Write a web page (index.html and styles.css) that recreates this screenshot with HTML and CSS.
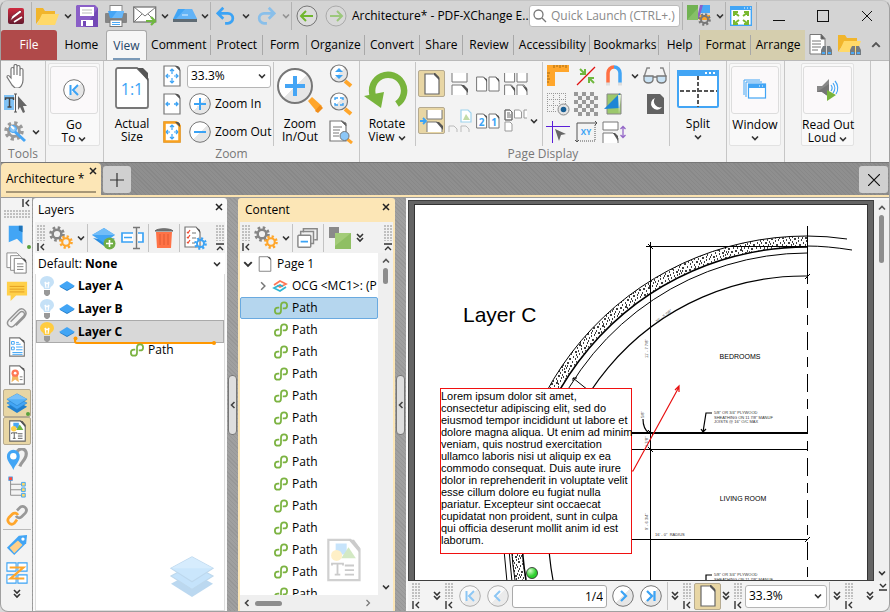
FILE: index.html
```html
<!DOCTYPE html>
<html lang="en">
<head>
<meta charset="utf-8">
<title>Architecture* - PDF-XChange Editor</title>
<link rel="stylesheet" href="styles.css">
</head>
<body>
<svg class="defs" aria-hidden="true">
<defs>
<linearGradient id="disc" x1="0" y1="0" x2="1" y2="1"><stop offset=".5" stop-color="#fff"/><stop offset=".5" stop-color="#e6e6e6"/></linearGradient>
<linearGradient id="red" x1="0" y1="0" x2="0" y2="1"><stop offset="0" stop-color="#d02c40"/><stop offset="1" stop-color="#631a2e"/></linearGradient>
<radialGradient id="ball" cx=".35" cy=".3"><stop offset="0" stop-color="#d4ffc8"/><stop offset="1" stop-color="#2fd02f"/></radialGradient>
<pattern id="speckle" width="23" height="19" patternUnits="userSpaceOnUse"><rect width="23" height="19" fill="#fff"/><path d="M1 1h1M4 3h2M8 1h1M11 4h1M15 2h2M20 1h1M2 6h1M6 7h1M9 6h2M14 7h1M18 5h2M21 8h1M0 10h2M4 12h1M7 10h1M12 11h2M16 10h1M19 12h1M2 15h1M6 15h2M10 14h1M14 15h1M17 17h2M21 15h1M4 18h1M9 17h1M13 18h1M12 1h1M6 4h1M17 8h1M10 9h1M1 13h1M22 4h1M16 13h1M3 9h1M13 5h1M20 10h1M8 12h1M5 1h1M0 4h1M12 8h1M15 5h1M11 16h1M0 17h1" stroke="#000" stroke-width="1.300"/></pattern>
</defs>
<symbol id="chev" viewBox="0 0 8 8"><path d="M1 2.500l3 3 3-3" fill="none" stroke="#333" stroke-width="1.600"/></symbol>
<symbol id="chev-up" viewBox="0 0 8 8"><path d="M1 5.500l3-3 3 3" fill="none" stroke="#555" stroke-width="1.600"/></symbol>
<symbol id="chev-l" viewBox="0 0 8 8"><path d="M5.500 1l-3 3 3 3" fill="none" stroke="#444" stroke-width="1.600"/></symbol>
<symbol id="chev-r" viewBox="0 0 8 8"><path d="M2.500 1l3 3-3 3" fill="none" stroke="#777" stroke-width="1.200"/></symbol>
<symbol id="dchev" viewBox="0 0 8 10"><path d="M1 1l3 3 3-3M1 5l3 3 3-3" fill="none" stroke="#333" stroke-width="1.600"/></symbol>
<symbol id="home" viewBox="0 0 8 8"><path d="M1 0v8M7 1L4 4l3 3M4 4h1" fill="none" stroke="#333" stroke-width="1.400"/></symbol>
<symbol id="upbar" viewBox="0 0 8 8"><path d="M0 1h8M1 7l3-3 3 3" fill="none" stroke="#333" stroke-width="1.400"/></symbol>
<symbol id="downbar" viewBox="0 0 8 8"><path d="M0 7h8M1 1l3 3 3-3" fill="none" stroke="#333" stroke-width="1.400"/></symbol>
<symbol id="x" viewBox="0 0 8 8"><path d="M1 1l6 6M7 1L1 7" fill="none" stroke="#222" stroke-width="1.500"/></symbol>

<symbol id="app" viewBox="0 0 16 16"><rect width="16" height="16" rx="2" fill="url(#red)"/><path d="M2 13l2-5 8-6 2 2-8 6zM7 13l7-5" fill="#fff" stroke="#7a1c30" stroke-width=".8"/><path d="M6 14l8-5" stroke="#fff" stroke-width="1.500"/></symbol>
<symbol id="folder" viewBox="0 0 24 20"><path d="M0 18V2h7l2 3h10v4H7z" fill="#f1b52c"/><path d="M6 8h17l-4 11H1z" fill="#ffd969"/></symbol>
<symbol id="save" viewBox="0 0 22 22"><path d="M1 0h18l3 3v19H0V1z" fill="#8a5fc7"/><path d="M22 3v19H9z" fill="#7348b6"/><rect x="4" y="2" width="14" height="9" fill="#fff"/><path d="M6 5h10M6 8h10" stroke="#bbb"/><path d="M5 15h12v6H5z" fill="#fff"/><rect x="7" y="16" width="3" height="5" fill="#7348b6"/></symbol>
<symbol id="print" viewBox="0 0 22 22"><rect x="5" y=".5" width="12" height="7" fill="#fff" stroke="#888"/><rect y="8" width="22" height="10" rx="1" fill="#858585"/><path d="M3 6h16l-2 7H5z" fill="#45a5f5"/><path d="M12 6h7l-2 7H7z" fill="#68b8fa"/><rect x="5" y="15" width="12" height="6.500" fill="#fff" stroke="#777"/><path d="M7 17.500h8M7 19.500h8" stroke="#4aa8f5"/></symbol>
<symbol id="mail" viewBox="0 0 24 20"><rect x=".7" y="1" width="22" height="15" fill="#fff" stroke="#777" stroke-width="1.300"/><path d="M1 1l11 9L23 1M1 16l8-8M23 16l-8-8" fill="none" stroke="#777"/><path d="M13 15h8M18 11l4 4-4 4" fill="none" stroke="#70b83f" stroke-width="2.200"/></symbol>
<symbol id="scan" viewBox="0 0 24 16"><path d="M5 1h14l5 10H0z" fill="#41a5f5"/><path d="M12 1h7l5 10H3z" fill="#78bdf8" opacity=".6"/><rect y="11" width="24" height="3" fill="#5f6b74"/><path d="M9 7h6" stroke="#e4f2ff"/></symbol>
<symbol id="undo" viewBox="0 0 22 20"><path d="M8 1L2 7l6 6M2 7h11a5.500 5.500 0 0 1 0 11h-3" fill="none" stroke="#3ba3f5" stroke-width="3"/></symbol>
<symbol id="redo" viewBox="0 0 22 20"><path d="M14 1l6 6-6 6M20 7H9a5.500 5.500 0 0 0 0 11h3" fill="none" stroke="#89bfea" stroke-width="3"/></symbol>
<symbol id="back" viewBox="0 0 22 22"><circle cx="11" cy="11" r="10" fill="#dcdcdc" stroke="#777"/><path d="M17 11H6M10 6l-5 5 5 5" fill="none" stroke="#70b62f" stroke-width="2"/></symbol>
<symbol id="fwd" viewBox="0 0 22 22"><circle cx="11" cy="11" r="10" fill="#d8d8d8" stroke="#aaa"/><path d="M5 11h11M12 6l5 5-5 5" fill="none" stroke="#9cc87c" stroke-width="2"/></symbol>
<symbol id="lens" viewBox="0 0 14 14"><circle cx="5.500" cy="5.500" r="4.500" fill="none" stroke="#777" stroke-width="1.300"/><path d="M9 9l4 4" stroke="#777" stroke-width="1.300"/></symbol>
<symbol id="gear" viewBox="0 0 16 16"><circle cx="8" cy="8" r="6.300" fill="none" stroke="currentColor" stroke-width="3" stroke-dasharray="2.500 2.440"/><circle cx="8" cy="8" r="4.300" fill="none" stroke="currentColor" stroke-width="2.400"/></symbol>
<symbol id="ui" viewBox="0 0 24 22"><path d="M0 0h11v15H0z" fill="#71b252"/><path d="M13 0h10v8H13z" fill="#4ba8f5"/><path d="M13 0h3l-4 14-2-1z" fill="#8a60c8"/><path d="M13 10h10v5H12z" fill="#ffa62b"/><path d="M0 15L11 3v12z" fill="#86c067"/><g color="#777" transform="translate(11 8)"><use href="#gear" width="13" height="13"/></g></symbol>
<symbol id="full" viewBox="0 0 22 20"><rect x=".7" y=".7" width="20.600" height="18.600" fill="#fff" stroke="#42a5f5" stroke-width="1.400"/><path d="M0 0h22v4H0z" fill="#42a5f5"/><path d="M14 2h1M17 2h1M20 2h1" stroke="#fff"/><path d="M4 10V6h4M18 10V6h-4M4 14v4h4M18 14v4h-4M5 7l4 3M17 7l-4 3M5 17l4-3M17 17l-4-3" fill="none" stroke="#7ab92f" stroke-width="2"/></symbol>
<symbol id="finddoc" viewBox="0 0 24 22"><path d="M1 .5h11l4 4V20H1z" fill="#fff" stroke="#777"/><path d="M12 0v5h4zM3 7h9M3 10h9M3 13h9M3 16h6" stroke="#777" fill="#555"/><path d="M12 21v-5l2-4h3v9zM23 21v-5l-2-4h-3v9z" fill="#757b80"/><path d="M13 19h3M19 19h3" stroke="#4ba8f5" stroke-width="2"/></symbol>
<symbol id="findfold" viewBox="0 0 24 22"><path d="M0 18V1h7l2 3h10v4H7z" fill="#f1b52c"/><path d="M6 7h17l-4 11H1z" fill="#ffd969"/><path d="M12 21v-5l2-4h3v9zM23 21v-5l-2-4h-3v9z" fill="#757b80"/><path d="M13 19h3M19 19h3" stroke="#4ba8f5" stroke-width="2"/></symbol>

<symbol id="hand" viewBox="0 0 20 24"><path d="M6 21L1 13c0-2 2-2 3 0l1 1V5c0-2 3-2 3 0v6V2c0-2 3-2 3 0v9-8c0-2 3-2 3 0v9-6c0-2 3-2 3 0v10c0 5-3 8-5 8H9z" fill="#fff" stroke="#777" stroke-width="1.200"/></symbol>
<symbol id="tsel" viewBox="0 0 24 22"><rect y="2" width="10" height="15" fill="#80c2f5"/><path d="M1.500 7V5h8v2M5.500 5v9M3.500 14h4" stroke="#444" stroke-width="1.500" fill="none"/><path d="M10 1h3M10 19h3M11.500 1v18" stroke="#555"/><path d="M14 3l9 10h-4l2 6-2 1-3-6-2 3z" fill="#666"/></symbol>
<symbol id="toolgear" viewBox="0 0 24 22"><g color="#999"><use href="#gear" width="20" height="20"/></g><path d="M8 8l13 12" stroke="#45a5f5" stroke-width="3"/><circle cx="9" cy="8" r="3.500" fill="#8cc7f7" stroke="#45a5f5"/><path d="M7 5l3 3" stroke="#fff" stroke-width="2"/></symbol>
<symbol id="cfirst" viewBox="0 0 22 22"><circle cx="11" cy="11" r="10.300" fill="url(#disc)" stroke="#777"/><path d="M7.500 6v10M15 6l-5 5 5 5" fill="none" stroke="#3ba3f5" stroke-width="2"/></symbol>
<symbol id="clast" viewBox="0 0 22 22"><circle cx="11" cy="11" r="10.300" fill="url(#disc)" stroke="#777"/><path d="M14.500 6v10M7 6l5 5-5 5" fill="none" stroke="#3ba3f5" stroke-width="2.200"/></symbol>
<symbol id="cprev" viewBox="0 0 22 22"><circle cx="11" cy="11" r="10.300" fill="url(#disc)" stroke="#777"/><path d="M13 6l-5 5 5 5" fill="none" stroke="#3ba3f5" stroke-width="2"/></symbol>
<symbol id="cnext" viewBox="0 0 22 22"><circle cx="11" cy="11" r="10.300" fill="url(#disc)" stroke="#777"/><path d="M9 6l5 5-5 5" fill="none" stroke="#3ba3f5" stroke-width="2.200"/></symbol>
<symbol id="cplus" viewBox="0 0 22 22"><circle cx="11" cy="11" r="10.300" fill="url(#disc)" stroke="#777"/><path d="M5 11h12M11 5v12" stroke="#3ba3f5" stroke-width="2"/></symbol>
<symbol id="cminus" viewBox="0 0 22 22"><circle cx="11" cy="11" r="10.300" fill="url(#disc)" stroke="#777"/><path d="M5 11h12" stroke="#3ba3f5" stroke-width="2"/></symbol>
<symbol id="pg" viewBox="0 0 18 22"><path d="M1 1h12l4 4v16H1z" fill="#fff" stroke="#777" stroke-width="1.200"/><path d="M12 1l5 5V3l-2-2z" fill="#555"/></symbol>
<symbol id="fitpage" viewBox="0 0 18 22"><use href="#pg"/><path d="M9 4v5M9 13v5M3 11h4M11 11h4M7 6l2-2 2 2M7 16l2 2 2-2M5 9l-2 2 2 2M13 9l2 2-2 2" stroke="#3ba3f5" fill="none" stroke-width="1.200"/></symbol>
<symbol id="fitwidth" viewBox="0 0 18 22"><use href="#pg"/><path d="M3 11h4M11 11h4M5 9l-2 2 2 2M13 9l2 2-2 2" stroke="#3ba3f5" fill="none" stroke-width="1.300"/></symbol>
<symbol id="fitvis" viewBox="0 0 18 22"><use href="#fitpage"/><path d="M1.500 1.500h12l3 3v16h-15z" stroke="#f9a11f" stroke-width="2.500" fill="none"/><path d="M12 1l5 5V3l-2-2z" fill="#555"/></symbol>
<symbol id="zoombig" viewBox="0 0 48 48"><path d="M32 34l4-4 10 9-5 6z" fill="#ffa62b"/><path d="M44 38l3 3-5 5-3-2z" fill="#f08d1a"/><circle cx="19" cy="19" r="17" fill="url(#disc)" stroke="#777" stroke-width="2"/><path d="M9 19h20M19 9v20" stroke="#45a5f5" stroke-width="4"/></symbol>
<symbol id="zoomdyn" viewBox="0 0 24 24"><path d="M16 17l6 5" stroke="#ffa62b" stroke-width="4"/><circle cx="10" cy="9.500" r="8.500" fill="url(#disc)" stroke="#777" stroke-width="1.200"/><path d="M6 8l4-4 4 4zM6 11h8l-4 4z" fill="#3ba3f5"/></symbol>
<symbol id="zoommarq" viewBox="0 0 24 24"><path d="M16 17l6 5" stroke="#ffa62b" stroke-width="4"/><circle cx="10" cy="9.500" r="8.500" fill="url(#disc)" stroke="#777" stroke-width="1.200"/><path d="M6 8V6h3M11 6h3v2M6 11v2h3M14 11v2h-3" fill="none" stroke="#3ba3f5" stroke-width="1.400"/></symbol>
<symbol id="zoomdoc" viewBox="0 0 24 24"><path d="M1 1h12l4 4v16H1z" fill="#fff" stroke="#777" stroke-width="1.200"/><path d="M12 1l5 5V3zM4 7h9M4 10h7M4 13h6M4 16h6" stroke="#777" fill="#555"/><path d="M18 19l5 4" stroke="#ffa62b" stroke-width="3"/><circle cx="15.500" cy="16" r="4.500" fill="#8cc7f7" stroke="#777"/></symbol>
<symbol id="rotate" viewBox="0 0 46 40"><path d="M9 25a16 16 0 1 1 24 8" fill="none" stroke="#78b43c" stroke-width="6.500"/><path d="M0 25l20-4-3 16z" fill="#78b43c"/></symbol>

<symbol id="p1" viewBox="0 0 24 24"><path d="M5 2h10l4 4v16H5z" fill="#fff" stroke="#666" stroke-width="1.200"/><path d="M14 1v2l5 5V5l-4-4z" fill="#555"/></symbol>
<symbol id="p2" viewBox="0 0 24 24"><path d="M4 1v9h15V1M4 23V13h10l5 4v6" fill="#fff" stroke="#777"/><path d="M13 13l7 8v-4l-4-4z" fill="#555"/></symbol>
<symbol id="p3" viewBox="0 0 24 24"><path d="M.6 5h7l3 3v11H.6zM13 5h7l3 3v11H13z" fill="#fff" stroke="#777"/><path d="M7 5l4 5V7zM19 5l4 5V7z" fill="#555"/></symbol>
<symbol id="p4" viewBox="0 0 24 24"><path d="M.6 1v9h10V1M13 1v9h10V1M.6 23V13h7l3 4v6M13 23V13h7l3 4v6" fill="#fff" stroke="#777"/><path d="M6 13l5 7v-4zM18 13l5 7v-4z" fill="#555"/></symbol>
<symbol id="p5" viewBox="0 0 24 24"><path d="M7 1v9h15V1M7 23V13h10l5 4v6" fill="#fff" stroke="#777"/><path d="M16 13l7 8v-4l-4-4z" fill="#555"/><path d="M0 12h5M3 9l3 3-3 3" stroke="#3ba3f5" stroke-width="1.800" fill="none"/></symbol>
<symbol id="p6" viewBox="0 0 24 24"><path d="M13 1h7l3 3v9H13z" fill="#fff" stroke="#9ed3ee" stroke-width="1.200"/><path d="M15 11l3-6 4 6z" fill="#c3dba8"/><path d="M1 23v-6h5l3 3v3M13 23v-6h5l3 3v3" fill="none" stroke="#bbb"/></symbol>
<symbol id="p8" viewBox="0 0 24 24"><path d="M1 1h5l2 2v8H1zM10.500 1h5l2 2v6h-7zM1 13h5l2 2v7H1zM23 1h-3v8h3" fill="#fff" stroke="#999"/><path d="M1 1h5l2 2v8H1zM3 4h3M3 6h4M3 8h4" fill="none" stroke="#666"/></symbol>
<symbol id="rulers" viewBox="0 0 24 24"><path d="M1 1h22v7H9v14H1z" fill="#ffa62b"/><path d="M8 1v3M11 1v2M14 1v3M17 1v2M20 1v3M1 9h3M1 12h2M1 15h3M1 18h2" stroke="#a66a10"/></symbol>
<symbol id="snapx" viewBox="0 0 24 24"><path d="M3 21L21 3" stroke="#e01010" stroke-width="1.200"/><path d="M6 5l5 5M11 5v5H6M20 19l-5-5M15 19v-5h5" fill="none" stroke="#70b83f" stroke-width="2"/></symbol>
<symbol id="magnet" viewBox="0 0 24 24"><path d="M6 20V9a6 6 0 0 1 6-6" fill="none" stroke="#ff7043" stroke-width="3.500"/><path d="M12 3a6 6 0 0 1 6 6v11" fill="none" stroke="#42a5f5" stroke-width="3.500"/><path d="M4 20h4M16 20h4" stroke="#ddd" stroke-width="3"/></symbol>
<symbol id="glasses" viewBox="0 0 24 24"><path d="M1 13l3-9h3M23 13l-3-9h-3" fill="none" stroke="#888" stroke-width="1.400"/><path d="M1 12h9v4c-1 4-8 4-9 0zM14 12h9v4c-1 4-8 4-9 0zM10 13h4" fill="#c9e3f5" stroke="#777" stroke-width="1.300"/></symbol>
<symbol id="grid" viewBox="0 0 24 24"><path d="M1 1.500h19M1 7.500h19M1 13.500h12M1 19.500h10M1.500 1v19M7.500 1v19M13.500 1v11M19.500 1v11" stroke="#999" stroke-dasharray="1 1"/><circle cx="17.500" cy="17.500" r="5.500" fill="#e5e5e5" stroke="#888"/><circle cx="17.500" cy="17.500" r="2.800" fill="#195f95"/></symbol>
<symbol id="checker" viewBox="0 0 24 24"><path d="M0 2h24M0 10h24M0 18h24" stroke="#999" stroke-width="4" stroke-dasharray="4"/><path d="M-4 6h28M-4 14h28M-4 22h28" stroke="#999" stroke-width="4" stroke-dasharray="4"/></symbol>
<symbol id="tri" viewBox="0 0 24 24"><path d="M5 2h14v20H5z" fill="#9cc86c" stroke="#888"/><path d="M18 1v15L2 17z" fill="#1d86d6"/><path d="M16 3h3l-2 19z" fill="#e4efd8"/></symbol>
<symbol id="night" viewBox="0 0 24 24"><path d="M4 2h13l4 4v16H4z" fill="#626262"/><path d="M12 6a6 6 0 1 0 7 9 6 6 0 0 1-7-9" fill="#fff"/></symbol>
<symbol id="guides" viewBox="0 0 24 24"><path d="M0 6.500h24M6.500 1v22" stroke="#5a1fd8"/><path d="M9 9l11 5-5 1-2 6z" fill="#666"/></symbol>
<symbol id="gaps" viewBox="0 0 24 24"><path d="M1 2v8h15V2zM1 23V13h10l5 5v5" fill="#fff" stroke="#777"/><path d="M11 13l5 8v-5l-3-3z" fill="#555"/><path d="M21 7v10M18.500 9L21 6.500 23.500 9M18.500 15l2.500 2.500 2.500-2.500" fill="none" stroke="#9467c7" stroke-width="1.300"/></symbol>
<symbol id="split" viewBox="0 0 42 38"><rect x="1" y="1" width="40" height="36" rx="1.500" fill="#fff" stroke="#42a5f5" stroke-width="2"/><path d="M0 0h42v6H0z" fill="#42a5f5"/><path d="M28 3h2M32 3h2M36 3h2" stroke="#fff" stroke-width="2"/><path d="M21 6v31M3 21h37" stroke="#555" stroke-width="2" stroke-dasharray="4 2"/></symbol>
<symbol id="windows" viewBox="0 0 24 22"><path d="M1 16V1h16M3 18V3h16" fill="none" stroke="#42a5f5"/><rect x="5.500" y="5" width="17" height="14" fill="#fff" stroke="#42a5f5" stroke-width="1.200"/><path d="M5 5h18v4H5z" fill="#42a5f5"/><path d="M16 7h1M19 7h1" stroke="#fff"/></symbol>
<symbol id="speak" viewBox="0 0 24 24"><path d="M1 8h5l7-7v18l-7-5H1z" fill="#888"/><path d="M1 14l12-8v13l-7-5z" fill="#757575"/><path d="M15 7a5 5 0 0 1 0 6M17 5a8 8 0 0 1 0 10M19 3a11 11 0 0 1 1 13" fill="none" stroke="#42a5f5" stroke-width="1.200"/><path d="M11 12l9 5-9 6z" fill="#78b43c"/></symbol>

<symbol id="bookmark" viewBox="0 0 24 24"><path d="M3 2h15v20l-6-6-9 4z" fill="#42a5f5"/><path d="M14 2h4v7l-4-2z" fill="#1f73b7"/></symbol>
<symbol id="pages" viewBox="0 0 24 24"><path d="M1 17V1h11l3 3v13z" fill="#fff" stroke="#888"/><path d="M5 20V4h10l3 3v13z" fill="#fff" stroke="#888"/><path d="M9 23V7h9l4 4v12zM12 13h7M12 16h7M12 19h7" fill="#fff" stroke="#777"/><path d="M17 7l5 5v-3l-2-2z" fill="#555"/></symbol>
<symbol id="comment" viewBox="0 0 24 24"><path d="M1 2h22v15H11l-6 6v-6H1z" fill="#ffd04a"/><path d="M4 7h16M4 10h16M4 13h16" stroke="#e09b20"/></symbol>
<symbol id="clip" viewBox="0 0 24 24"><path d="M5 15L15 5c3-3 7 1 4 4L9 19c-4 4-10-1-6-6L13 3c5-5 12 1 7 7l-9 9" fill="none" stroke="#949494" stroke-width="1.600"/></symbol>
<symbol id="fields" viewBox="0 0 24 24"><path d="M4 2h11l5 5v15H4z" fill="#fff" stroke="#777" stroke-width="1.200"/><path d="M14 2l6 6V5z" fill="#555"/><path d="M6 6h3v3H6zM6 12h3v3H6z" fill="none" stroke="#3ba3f5"/><path d="M11 7h3M11 9h5M11 12h7M11 15h7M7 18h11M7 20h11" stroke="#3ba3f5"/></symbol>
<symbol id="cert" viewBox="0 0 24 24"><path d="M4 2h11l5 5v15H4z" fill="#fff" stroke="#777" stroke-width="1.200"/><path d="M14 2l6 6V5z" fill="#555"/><path d="M7 12l-1 8 4-3 4 3-1-8" fill="#f3b65f"/><circle cx="10" cy="10" r="4" fill="#ff7754"/><circle cx="10" cy="10" r="1.500" fill="#fff"/><path d="M15 14h3M15 17h3" stroke="#777"/></symbol>
<symbol id="layers" viewBox="0 0 24 22"><path d="M1 15l11-6 11 6-11 7z" fill="#207fce"/><path d="M1 11l11-6 11 6-11 7z" fill="#42a5f5" stroke="#2a80c4" stroke-width=".6"/><path d="M1 7l11-6 11 6-11 7z" fill="#53b0f7" stroke="#287fc6" stroke-width=".6"/><path d="M1 7l11-6 11 6z" fill="#79c1f9"/></symbol>
<symbol id="contentdoc" viewBox="0 0 24 24"><path d="M4 1h12l5 5v17H4z" fill="#fff" stroke="#666" stroke-width="1.200"/><path d="M15 1l6 7V5l-3-4z" fill="#555"/><rect x="8" y="3" width="6" height="6" fill="#4aa8f5"/><path d="M11 11l4-6 4 6z" fill="#70b83f"/><circle cx="8.500" cy="9.500" r="3" fill="#ffd04a"/><path d="M6 15v-1h6v1M9 14v6M7.500 20h3M13 15h5M13 17.500h5M13 20h5" stroke="#555" fill="none"/></symbol>
<symbol id="pins" viewBox="0 0 24 24"><path d="M15 20c2-5 7-8 7-13a5 5 0 0 0-10-2" fill="none" stroke="#999" stroke-width="3.500"/><path d="M8 24C6 18 1 15 1 9a7 7 0 0 1 14 0c0 6-5 9-7 15z" fill="#42a5f5"/><circle cx="8" cy="9" r="3.500" fill="#fff"/></symbol>
<symbol id="tree" viewBox="0 0 24 24"><path d="M5 4v17h12M5 9h12M5 15h12" fill="none" stroke="#888"/><rect x="3" y="1" width="4" height="4" fill="#ff4a3a" stroke="#3ba3f5" stroke-width=".8"/><path d="M17 7h4v4h-4zM17 13h4v4h-4zM17 19h4v4h-4z" fill="#ffd969" stroke="#3ba3f5"/></symbol>
<symbol id="link" viewBox="0 0 24 24"><path d="M12 7l3-3c3-4 10 1 6 6l-4 4c-2 2-5 1-6-1" fill="none" stroke="#999" stroke-width="3"/><path d="M12 17l-3 4c-4 3-9-2-6-6l4-4c2-2 5-1 6 1" fill="none" stroke="#ffa62b" stroke-width="3"/></symbol>
<symbol id="tag" viewBox="0 0 24 24"><path d="M1 15L14 2l9-1-1 9L9 23z" fill="#42a5f5"/><path d="M4 15l9-8 5 5-9 9z" fill="#ffd08a"/><circle cx="18.500" cy="5.500" r="1.800" fill="#fff"/></symbol>
<symbol id="order" viewBox="0 0 24 24"><path d="M1 1h10v9H1zM13 1h10v9H13zM1 14h10v9H1zM13 14h10v9H13z" fill="#fff" stroke="#3ba3f5" stroke-width="1.200"/><path d="M4 6h15L5 18h15" fill="none" stroke="#ffa62b" stroke-width="2.400"/></symbol>

<symbol id="gears" viewBox="0 0 24 24"><g color="#858585"><use href="#gear" width="16" height="16"/></g><g color="#ffa62b"><use href="#gear" x="10" y="9" width="14" height="14"/></g></symbol>
<symbol id="addlayer" viewBox="0 0 24 24"><path d="M1 12l11 8 11-8-11 2z" fill="#2a8de0"/><path d="M0 9l12-7 11 7-11 8z" fill="#42a5f5"/><path d="M0 9l12-7 11 7z" fill="#72bdf8"/><circle cx="17.500" cy="17.500" r="6" fill="#70ad45"/><path d="M14 17.500h7M17.500 14v7" stroke="#fff" stroke-width="1.600"/></symbol>
<symbol id="rename" viewBox="0 0 24 24"><path d="M12 7H1v9h11M17 7h5v9h-5" fill="#fff" stroke="#3ba3f5" stroke-width="1.700"/><path d="M3 11.500h8" stroke="#3ba3f5" stroke-width="1.600"/><path d="M12 1.500h7M12 22.500h7M15.500 1v22" stroke="#777" stroke-width="1.400"/></symbol>
<symbol id="trash" viewBox="0 0 24 24"><path d="M4 6h16l-1 16H5z" fill="#ff7347"/><path d="M8 8v11M12 8v11M16 8v11" stroke="#e05a32"/><path d="M3 5c2-3 16-3 18 0z" fill="#777" stroke="#666"/></symbol>
<symbol id="laylist" viewBox="0 0 24 24"><path d="M2 1h11l4 5v15H2z" fill="#fff" stroke="#777" stroke-width="1.200"/><path d="M13 1l4 6V4z" fill="#555"/><path d="M4 6l1 1 2-3M4 11l1 1 2-3M4 16l1 1 2-3" fill="none" stroke="#ee4b30" stroke-width="1.200"/><path d="M9 7h4M9 12h4M9 17h3" stroke="#777"/><g color="#3ba3f5"><use href="#gear" x="11" y="11" width="13" height="13"/></g></symbol>
<symbol id="bulb" viewBox="0 0 16 20"><path d="M5 13c0-3-4-3-4-7a7 6 0 0 1 14 0c0 4-4 4-4 7z" fill="currentColor"/><path d="M6 6l1 6M10 6l-1 6M6 6l2 2 2-2" fill="none" stroke="#fff" stroke-width="1.200"/><path d="M5 14h6v4l-2 2H7l-2-2z" fill="#999"/></symbol>
<symbol id="layer1" viewBox="0 0 16 12"><path d="M1 6v1l7 4 7-4V6z" fill="#1f78c4"/><path d="M0 6l8-5 8 5-8 4z" fill="#42a5f5"/></symbol>
<symbol id="path" viewBox="0 0 16 16"><path d="M6 7.500H4.500A3.500 3.500 0 1 0 8 11V5a3.500 3.500 0 1 1 3.500 3.500H10" fill="none" stroke="#7cb342" stroke-width="2"/></symbol>
<symbol id="collapse" viewBox="0 0 24 24"><path d="M7 6V2h15v12h-3M4 9V5h14v13h-3" fill="none" stroke="#888" stroke-width="1.600"/><rect x="1" y="9" width="14" height="13" rx="1" fill="#fff" stroke="#888" stroke-width="1.600"/><path d="M4 16h8" stroke="#3ba3f5" stroke-width="1.800"/></symbol>
<symbol id="squares" viewBox="0 0 24 24"><rect x="1" y="1" width="10" height="11" fill="#8a8a8a"/><rect x="7" y="7" width="16" height="16" fill="#8fbf63"/><path d="M7 7h16L7 20z" fill="#a3cc78"/></symbol>
<symbol id="ocg" viewBox="0 0 16 14"><path d="M2 6l6-4 6 3-6 3-3-1.500" fill="none" stroke="#ff7654" stroke-width="1.700"/><path d="M14 8l-6 4-6-3 6-3 3 1.500" fill="none" stroke="#2fb5d3" stroke-width="1.700"/></symbol>
</svg>

<div class="window">
  <header class="titlebar">
    <span class="cell w30"><svg class="i16"><use href="#app"/></svg></span><i class="sep"></i>
    <button class="cell w32" aria-label="Open"><svg class="i24"><use href="#folder"/></svg></button><button class="cell w8" aria-label="Open menu"><svg class="i8"><use href="#chev"/></svg></button>
    <button class="cell w30" aria-label="Save"><svg class="i22"><use href="#save"/></svg></button>
    <button class="cell w28" aria-label="Print"><svg class="i22"><use href="#print"/></svg></button>
    <button class="cell w30" aria-label="Email"><svg class="i24"><use href="#mail"/></svg></button><button class="cell w10" aria-label="Email menu"><svg class="i8"><use href="#chev"/></svg></button>
    <button class="cell w30" aria-label="Scan"><svg class="i24"><use href="#scan"/></svg></button><button class="cell w10" aria-label="Scan menu"><svg class="i8"><use href="#chev"/></svg></button><i class="sep"></i>
    <button class="cell w30" aria-label="Undo"><svg class="i20"><use href="#undo"/></svg></button><button class="cell w10" aria-label="Undo menu"><svg class="i8"><use href="#chev"/></svg></button>
    <button class="cell w30" aria-label="Redo"><svg class="i20"><use href="#redo"/></svg></button><button class="cell w10 dim" aria-label="Redo menu"><svg class="i8"><use href="#chev"/></svg></button><i class="sep"></i>
    <button class="cell w30" aria-label="Back"><svg class="i22"><use href="#back"/></svg></button><button class="cell w28" aria-label="Forward"><svg class="i22"><use href="#fwd"/></svg></button>
    <h1 class="title">Architecture* - PDF-XChange E..</h1>
    <label class="search"><svg class="i14"><use href="#lens"/></svg><input type="text" aria-label="Quick Launch" placeholder="Quick Launch (CTRL+.)"></label>
    <i class="sep"></i>
    <button class="cell w32" aria-label="UI options"><svg class="i24"><use href="#ui"/></svg></button><button class="cell w10" aria-label="UI options menu"><svg class="i8"><use href="#chev"/></svg></button><i class="sep"></i>
    <button class="cell w30" aria-label="Full screen"><svg class="i22"><use href="#full"/></svg></button><i class="sep"></i>
    <button class="cell w44" aria-label="Minimize"><svg class="i12" viewBox="0 0 12 12"><path d="M0 10.500h12" stroke="#111"/></svg></button>
    <button class="cell w44" aria-label="Maximize"><svg class="i12" viewBox="0 0 12 12"><rect x=".5" y=".5" width="11" height="11" fill="none" stroke="#111"/></svg></button>
    <button class="cell w44" aria-label="Close"><svg class="i12" viewBox="0 0 12 12"><path d="M1 1l10 10M11 1L1 11" stroke="#111"/></svg></button>
  </header>

  <nav class="tabs">
    <button class="file">File</button><button>Home</button><button class="active">View</button><button class="bar">Comment</button><button class="bar">Protect</button><button class="bar">Form</button><button class="bar">Organize</button><button class="bar">Convert</button><button class="bar">Share</button><button class="bar">Review</button><button class="bar">Accessibility</button><button class="bar">Bookmarks</button><button class="bar">Help</button><button class="ctx bar">Format</button><button class="ctx">Arrange</button>
    <button aria-label="Find in document"><svg class="i24"><use href="#finddoc"/></svg></button><button aria-label="Search folder"><svg class="i24"><use href="#findfold"/></svg></button><button class="up" aria-label="Collapse ribbon"><svg class="i10"><use href="#chev-up"/></svg></button>
  </nav>

  <section class="ribbon">
    <div class="group g-tools">
      <div class="body"><div class="stack">
        <button aria-label="Hand"><svg class="i24"><use href="#hand"/></svg></button>
        <button aria-label="Select text"><svg class="i24"><use href="#tsel"/></svg></button>
        <button aria-label="Tools"><svg class="i24"><use href="#toolgear"/></svg></button>
      </div><svg class="i8 low"><use href="#chev"/></svg></div>
      <p>Tools</p>
    </div>
    <div class="group g-box">
      <button class="boxed"><span><svg class="i22"><use href="#cfirst"/></svg></span>Go<br>To <svg class="i8"><use href="#chev"/></svg></button>
    </div>
    <div class="group g-zoom">
      <div class="body">
        <button class="big w52"><svg class="actual" viewBox="0 0 34 42"><path d="M3 1h19l11 11v27a2 2 0 0 1-2 2H3a2 2 0 0 1-2-2V3a2 2 0 0 1 2-2z" fill="#fff" stroke="#777" stroke-width="1.800"/><path d="M22 1h6l5 5v8z" fill="#555"/><text x="17" y="28" text-anchor="middle" class="t-ratio">1:1</text></svg>Actual<br>Size</button>
        <div class="stack w28">
          <button aria-label="Fit page"><svg class="i22"><use href="#fitpage"/></svg></button>
          <button aria-label="Fit width"><svg class="i22"><use href="#fitwidth"/></svg></button>
          <button aria-label="Fit visible"><svg class="i22"><use href="#fitvis"/></svg></button>
        </div>
        <div class="stack wide">
          <span class="combo"><select aria-label="Zoom level"><option>33.3%</option></select><svg class="i8"><use href="#chev"/></svg></span>
          <button><svg class="i22"><use href="#cplus"/></svg>Zoom In</button>
          <button><svg class="i22"><use href="#cminus"/></svg>Zoom Out</button>
        </div>
        <i class="rsep"></i>
        <button class="big w50"><svg class="i48"><use href="#zoombig"/></svg>Zoom<br>In/Out</button>
        <div class="stack w32">
          <button aria-label="Dynamic zoom"><svg class="i24"><use href="#zoomdyn"/></svg></button>
          <button aria-label="Marquee zoom"><svg class="i24"><use href="#zoommarq"/></svg></button>
          <button aria-label="Loupe"><svg class="i24"><use href="#zoomdoc"/></svg></button>
        </div>
      </div>
      <p>Zoom</p>
    </div>
    <div class="group g-page">
      <div class="body">
        <button class="big w54"><svg class="rotate"><use href="#rotate"/></svg>Rotate<br><span>View <svg class="i8"><use href="#chev"/></svg></span></button>
        <i class="rsep"></i>
        <div class="layouts">
          <button class="on" aria-label="Single page"><svg class="i24"><use href="#p1"/></svg></button>
          <button aria-label="Continuous"><svg class="i24"><use href="#p2"/></svg></button>
          <button aria-label="Two pages"><svg class="i24"><use href="#p3"/></svg></button>
          <button aria-label="Two pages continuous"><svg class="i24"><use href="#p4"/></svg></button>
          <button class="on" aria-label="Show gaps"><svg class="i24"><use href="#p5"/></svg></button>
          <button aria-label="Cover page"><svg class="i24"><use href="#p6"/></svg></button>
          <button aria-label="Right to left"><svg class="i24" viewBox="0 0 24 24"><use href="#p3"/><text x="5.500" y="17" text-anchor="middle" class="t-num">2</text><text x="18" y="17" text-anchor="middle" class="t-num">1</text></svg></button>
          <button aria-label="Page flow"><svg class="i24"><use href="#p8"/></svg></button>
        </div>
        <svg class="i8 mid"><use href="#chev"/></svg>
        <i class="rsep"></i>
        <div class="aids">
          <button aria-label="Rulers"><svg class="i24"><use href="#rulers"/></svg></button><button aria-label="Snap"><svg class="i24"><use href="#snapx"/></svg></button><button aria-label="Magnet"><svg class="i24"><use href="#magnet"/></svg></button><svg class="i8"><use href="#chev"/></svg><button aria-label="Reading"><svg class="i24"><use href="#glasses"/></svg></button>
          <button aria-label="Grid"><svg class="i24"><use href="#grid"/></svg></button><button aria-label="Transparency grid"><svg class="i24"><use href="#checker"/></svg></button><button aria-label="Compare"><svg class="i24"><use href="#tri"/></svg></button><span></span><button aria-label="Night mode"><svg class="i24"><use href="#night"/></svg></button>
          <button aria-label="Guides"><svg class="i24"><use href="#guides"/></svg></button><button aria-label="Coordinates"><svg class="i24" viewBox="0 0 24 24"><path d="M3 22V3h20M21 1l2 2-2 2M1 20l2 2 2-2" fill="none" stroke="#555"/><path d="M6 21h15V5" fill="none" stroke="#555" stroke-dasharray="1 1"/><text x="12" y="15" text-anchor="middle" class="t-xy">XY</text></svg></button><button aria-label="Page gaps"><svg class="i24"><use href="#gaps"/></svg></button>
        </div>
        <i class="rsep"></i>
        <button class="big w54"><svg class="split"><use href="#split"/></svg>Split<br><svg class="i8 below"><use href="#chev"/></svg></button>
      </div>
      <p>Page Display</p>
    </div>
    <div class="group g-box">
      <button class="boxed"><span><svg class="i24"><use href="#windows"/></svg></span>Window<br><svg class="i8 below"><use href="#chev"/></svg></button>
    </div>
    <div class="group g-read">
      <button class="boxed"><span><svg class="i24"><use href="#speak"/></svg></span>Read Out<br>Loud <svg class="i8"><use href="#chev"/></svg></button>
    </div>
  </section>

  <div class="doctabs">
    <button class="doctab">Architecture *<svg class="i8"><use href="#x"/></svg></button>
    <button class="sq" aria-label="New tab"><svg class="i14" viewBox="0 0 14 14"><path d="M0 7h14M7 0v14" stroke="#333" stroke-width="1.200"/></svg></button>
    <button class="sq end" aria-label="Close document"><svg class="i12" viewBox="0 0 12 12"><path d="M0 0l12 12M12 0L0 12" stroke="#111" stroke-width="1.200"/></svg></button>
  </div>

  <main class="work">
    <nav class="side">
      <div class="sidetop"><svg class="i8"><use href="#home"/></svg><i class="dots"></i></div>
      <button class="dot" aria-label="Bookmarks pane"><svg class="i22"><use href="#bookmark"/></svg></button>
      <button aria-label="Thumbnails"><svg class="i22"><use href="#pages"/></svg></button>
      <button aria-label="Comments"><svg class="i22"><use href="#comment"/></svg></button>
      <button aria-label="Attachments"><svg class="i22"><use href="#clip"/></svg></button>
      <button aria-label="Fields"><svg class="i22"><use href="#fields"/></svg></button>
      <button aria-label="Signatures"><svg class="i22"><use href="#cert"/></svg></button>
      <button class="on dot" aria-label="Layers pane"><svg class="i22"><use href="#layers"/></svg></button>
      <button class="on" aria-label="Content pane"><svg class="i22"><use href="#contentdoc"/></svg></button>
      <button aria-label="Destinations"><svg class="i22"><use href="#pins"/></svg></button>
      <button aria-label="Structure"><svg class="i22"><use href="#tree"/></svg></button>
      <button aria-label="Links"><svg class="i22"><use href="#link"/></svg></button>
      <hr>
      <button aria-label="Tags"><svg class="i22"><use href="#tag"/></svg></button>
      <button aria-label="Order"><svg class="i22"><use href="#order"/></svg></button>
      <svg class="i10 more"><use href="#dchev"/></svg>
    </nav>

    <section class="panel layers">
      <h2>Layers<button aria-label="Close layers"><svg class="i8"><use href="#x"/></svg></button></h2>
      <div class="tools">
        <span class="grip"><i class="dots"></i><svg class="i8"><use href="#home"/></svg></span>
        <button class="w30" aria-label="Options"><svg class="i24"><use href="#gears"/></svg></button><button class="w10" aria-label="Options menu"><svg class="i8"><use href="#chev"/></svg></button><i class="tsep"></i>
        <button class="w30" aria-label="Add layer"><svg class="i24"><use href="#addlayer"/></svg></button><button class="w28" aria-label="Rename"><svg class="i24"><use href="#rename"/></svg></button><i class="tsep"></i>
        <button class="w28" aria-label="Delete"><svg class="i24"><use href="#trash"/></svg></button><i class="tsep"></i>
        <button class="w28" aria-label="Layer properties"><svg class="i24"><use href="#laylist"/></svg></button>
        <span class="grip end"><i class="dots"></i><svg class="i8"><use href="#upbar"/></svg></span>
      </div>
      <button class="config">Default:&nbsp;<b>None</b><svg class="i8"><use href="#chev"/></svg></button>
      <ul class="list">
        <li><svg class="bulb"><use href="#bulb"/></svg><svg class="i16"><use href="#layer1"/></svg>Layer A</li>
        <li><svg class="bulb"><use href="#bulb"/></svg><svg class="i16"><use href="#layer1"/></svg>Layer B</li>
        <li class="sel"><svg class="bulb lit"><use href="#bulb"/></svg><svg class="i16"><use href="#layer1"/></svg>Layer C
          <svg class="drop" viewBox="0 0 144 10"><path d="M2 2v3q0 2 2 2h136" fill="none" stroke="#ff9800" stroke-width="2"/><circle cx="2.500" cy="2.500" r="2" fill="#ff9800"/><circle cx="141" cy="7" r="2" fill="#ff9800"/></svg>
          <span class="dragged"><svg class="i14"><use href="#path"/></svg>Path</span></li>
      </ul>
      <svg class="mark"><use href="#layers"/></svg>
    </section>

    <div class="splitter"><button aria-label="Collapse layers"><svg class="i8"><use href="#chev-l"/></svg></button></div>

    <section class="panel content">
      <h2>Content<button aria-label="Close content"><svg class="i8"><use href="#x"/></svg></button></h2>
      <div class="tools">
        <span class="grip"><i class="dots"></i><svg class="i8"><use href="#home"/></svg></span>
        <button class="w30" aria-label="Options"><svg class="i24"><use href="#gears"/></svg></button><button class="w10" aria-label="Options menu"><svg class="i8"><use href="#chev"/></svg></button><i class="tsep"></i>
        <button class="w28" aria-label="Collapse"><svg class="i22"><use href="#collapse"/></svg></button><i class="tsep"></i>
        <button class="w30" aria-label="Highlight"><svg class="i24"><use href="#squares"/></svg></button><svg class="i10"><use href="#dchev"/></svg>
        <span class="grip end"><i class="dots"></i><svg class="i8"><use href="#upbar"/></svg></span>
      </div>
      <div class="scroller">
        <ul class="nodes">
          <li class="root"><svg class="i10"><use href="#chev"/></svg><svg class="i16"><use href="#pg"/></svg>Page 1</li>
          <li class="sub"><svg class="i10"><use href="#chev-r"/></svg><svg class="i16"><use href="#ocg"/></svg>OCG &lt;MC1&gt;: (P</li>
          <li class="sel"><svg class="i14"><use href="#path"/></svg>Path</li>
          <li><svg class="i14"><use href="#path"/></svg>Path</li><li><svg class="i14"><use href="#path"/></svg>Path</li>
          <li><svg class="i14"><use href="#path"/></svg>Path</li><li><svg class="i14"><use href="#path"/></svg>Path</li>
          <li><svg class="i14"><use href="#path"/></svg>Path</li><li><svg class="i14"><use href="#path"/></svg>Path</li>
          <li><svg class="i14"><use href="#path"/></svg>Path</li><li><svg class="i14"><use href="#path"/></svg>Path</li>
          <li><svg class="i14"><use href="#path"/></svg>Path</li><li><svg class="i14"><use href="#path"/></svg>Path</li>
          <li><svg class="i14"><use href="#path"/></svg>Path</li><li><svg class="i14"><use href="#path"/></svg>Path</li>
          <li><svg class="i14"><use href="#path"/></svg>Path</li>
        </ul>
        <div class="vbar"><svg class="i8"><use href="#chev-up"/></svg><i></i><svg class="i8 last"><use href="#chev"/></svg></div>
        <svg class="mark"><use href="#contentdoc"/></svg>
      </div>
      <div class="hbar"><svg class="i8"><use href="#chev-l"/></svg><i></i><svg class="i8 last"><use href="#chev-r"/></svg></div>
    </section>

    <div class="splitter"><button aria-label="Collapse content"><svg class="i8"><use href="#chev-l"/></svg></button></div>

    <section class="doc">
      <div class="view">
        <div class="canvas">
          <div class="page">
            <svg class="plan" viewBox="415 205 452 375" preserveAspectRatio="xMinYMin slice">
              <g fill="none" stroke="#000">
                <path d="M520 580A290.500 290.500 0 0 1 807 241.500" stroke="url(#speckle)" stroke-width="10"/>
                <path d="M515 580A296 296 0 0 1 807 236q20 0 40 3"/>
                <path d="M526 580A285 285 0 0 1 807 247" stroke-width="1.600"/><path d="M807 246q20 0 45 4"/>
                <path d="M551 423A279 279 0 0 1 807 253"/>
                <path d="M553 580A256 256 0 0 1 807 276" stroke-width="1.200"/>
                <path d="M504 550l3 32M509 550l3 32"/>
                <path d="M650.500 242v340M646 246.500h161M628 449.500h179M628 539.500h179"/>
                <path d="M628 433h179" stroke-width="2"/>
                <path d="M807.500 226v58" /><path d="M807.500 290v290" stroke-dasharray="18 7 10 7"/>
                <path d="M648 244l5 5M805 279l5-5M805 542l5-5M648 430l5 5M648 447l5 5M573 378l15 12M573 381v-3h4"/>
                <path d="M712 413h-6l-3 19M701 429l2 3 3-3M712 575h-6v8M643 419q0 10 6 14" stroke-width="1.200"/>
                <path d="M628 471h5l46-84M675 390l4-4v6" stroke="#e81010" stroke-width="1.200"/>
              </g>
              <text x="463" y="322" class="t-layer">Layer C</text>
              <text x="740" y="359" text-anchor="middle" class="t-room">BEDROOMS</text>
              <text x="743" y="501" text-anchor="middle" class="t-room">LIVING ROOM</text>
              <g class="t-note"><text x="714" y="414">5/8" OR 3/4" PLYWOOD</text><text x="714" y="419">SHEATHING ON 11 7/8" MANUF</text><text x="714" y="423">JOISTS @ 16" O/C MAX</text>
              <text x="714" y="576">5/8" OR 3/4" PLYWOOD</text><text x="714" y="581">SHEATHING ON 11 7/8" MANUF</text>
              <text x="655" y="536">16' - 0"&#160; RADIUS</text>
              <text transform="translate(648 358) rotate(-90)">11' - 7 7/8"</text><text transform="translate(648 530) rotate(-90)">9' - 6 3/4"</text><text transform="translate(648 447) rotate(-90)">1 7/8"</text><text transform="translate(644 418) rotate(-90)">5/8"</text>
              <text transform="translate(657 323) rotate(-37)">22' - 5 7/8"</text></g>
              <circle cx="532" cy="573" r="5.500" fill="url(#ball)" stroke="#222" stroke-width=".8"/>
            </svg>
            <p class="callout">Lorem ipsum dolor sit amet,<br>consectetur adipiscing elit, sed do<br>eiusmod tempor incididunt ut labore et<br>dolore magna aliqua. Ut enim ad minim<br>veniam, quis nostrud exercitation<br>ullamco laboris nisi ut aliquip ex ea<br>commodo consequat. Duis aute irure<br>dolor in reprehenderit in voluptate velit<br>esse cillum dolore eu fugiat nulla<br>pariatur. Excepteur sint occaecat<br>cupidatat non proident, sunt in culpa<br>qui officia deserunt mollit anim id est<br>laborum.</p>
          </div>
        </div>
        <div class="vbar"><svg class="i8"><use href="#chev-up"/></svg><i class="long"></i><svg class="i8 last"><use href="#chev"/></svg></div>
      </div>
      <footer class="status">
        <span class="grip"><i class="dots"></i><svg class="i8"><use href="#home"/></svg></span><svg class="i10 push"><use href="#dchev"/></svg>
        <span class="grip"><i class="dots"></i><svg class="i8"><use href="#home"/></svg></span>
        <button class="w28 faded" aria-label="First page"><svg class="i22"><use href="#cfirst"/></svg></button><button class="w28 faded" aria-label="Previous page"><svg class="i22"><use href="#cprev"/></svg></button>
        <input class="pageno" type="text" value="1/4" aria-label="Page number">
        <button class="w28" aria-label="Next page"><svg class="i22"><use href="#cnext"/></svg></button><button class="w28" aria-label="Last page"><svg class="i22"><use href="#clast"/></svg></button><i class="tsep"></i>
        <svg class="i10"><use href="#dchev"/></svg><span class="grip"><i class="dots"></i><svg class="i8"><use href="#home"/></svg></span>
        <button class="on" aria-label="Single page layout"><svg class="i24"><use href="#p1"/></svg></button><svg class="i10"><use href="#dchev"/></svg>
        <span class="grip"><i class="dots"></i><svg class="i8"><use href="#home"/></svg></span>
        <span class="combo"><select aria-label="Zoom"><option>33.3%</option></select><svg class="i8"><use href="#chev"/></svg></span><i class="tsep"></i>
        <svg class="i10"><use href="#dchev"/></svg><span class="grip"><i class="dots"></i><svg class="i8"><use href="#home"/></svg></span><svg class="i10 push"><use href="#dchev"/></svg>
        <svg class="i8 top"><use href="#downbar"/></svg>
      </footer>
    </section>
  </main>
</div>
</body>
</html>
```
FILE: styles.css
```css
* { box-sizing: border-box; }
html, body { height: 100%; margin: 0; }
body { background: #d9d9d9; font: 12px/14px "Open Sans", "Noto Sans", sans-serif; color: #000; overflow: hidden; }
h1, h2, p, ul, hr { margin: 0; padding: 0; font-weight: 400; font-size: 12px; list-style: none; }
button, input, select { font: inherit; color: inherit; margin: 0; padding: 0; border: 0; background: none; }
button { display: flex; align-items: center; justify-content: center; white-space: nowrap; }
svg { display: block; flex: none; overflow: hidden; }
.defs { position: absolute; width: 0; height: 0; }

.i8 { width: 8px; height: 8px; }
.i10 { width: 10px; height: 10px; }
.i12 { width: 12px; height: 12px; }
.i14 { width: 14px; height: 14px; }
.i16 { width: 16px; height: 16px; }
.i20 { width: 20px; height: 20px; }
.i22 { width: 22px; height: 22px; }
.i24 { width: 24px; height: 24px; }
.i48 { width: 48px; height: 48px; }
.w8 { width: 8px; }
.w10 { width: 10px; }
.w28 { width: 28px; }
.w30 { width: 30px; }
.w32 { width: 32px; }
.w44 { width: 44px; }
.w50 { width: 50px; }
.w52 { width: 52px; }
.w54 { width: 54px; }
.on { background: #e8d6a4; border: 1px solid #b5aa90; border-radius: 2px; }
.dots { display: block; width: 9px; height: 16px; background-image: radial-gradient(circle at 1px 1px, #c0c0c0 1px, transparent 1px); background-size: 3px 3px; }

.window { height: 100%; display: flex; flex-direction: column; border: 1px solid #a0a0a0; border-top-color: #c4c4c4; border-radius: 8px; overflow: hidden; background: #d4d4d4; }

.titlebar { display: flex; align-items: center; height: 29px; flex: none; }
.cell { display: flex; align-items: center; justify-content: center; flex: none; height: 28px; }
.dim { opacity: .4; }
.sep { width: 1px; height: 28px; background: #b2b2b2; flex: none; }
.title { flex: 1; min-width: 0; padding-left: 2px; white-space: nowrap; }
.search { display: flex; align-items: center; gap: 4px; width: 151px; height: 22px; padding: 0 3px; margin-right: 2px; background: #fff; border: 1px solid #bbb; border-radius: 3px; flex: none; }
.search input { width: 100%; min-width: 0; outline: 0; }
.search input::placeholder { color: #8a8a8a; opacity: 1; }

.tabs { display: grid; grid-template-columns: 56fr 49fr 41fr 64fr 52fr 44fr 58fr 55fr 44fr 51fr 76fr 69fr 41fr 51fr 54fr 32fr 26fr 26fr; height: 30px; flex: none; }
.tabs button { min-width: 0; position: relative; }
.tabs .file { background: #b04a4a; color: #fff; border-radius: 3px 3px 0 0; }
.tabs .active { background: #f6f6f6; border: 1px solid #a9a9a9; border-bottom: 0; border-radius: 3px 3px 0 0; color: #1f4568; }
.tabs .active::after { content: ""; position: absolute; left: 6px; right: 6px; bottom: 0; height: 2px; background: #7b9ab8; }
.tabs .bar::after { content: ""; position: absolute; right: 0; top: 5px; height: 20px; width: 1px; background: #a8a8a8; }
.tabs .ctx { background: #d5ceae; }

.ribbon { display: flex; height: 103px; flex: none; background: #f3f3f3; border-top: 1px solid #b9b9b9; border-bottom: 1px solid #777; }
.group { display: flex; flex-direction: column; border-right: 1px solid #c6c6c6; padding-top: 1px; flex: none; }
.group > p { height: 15px; text-align: center; color: #777; }
.body { display: flex; height: 85px; }
.g-tools { width: 45px; }
.g-tools .body { padding-left: 3px; gap: 4px; }
.g-zoom { width: 256px; }
.g-zoom .body { padding-left: 2px; }
.g-page { width: 367px; }
.g-box { width: 58px; padding: 2px 3px 0 2px; }
.g-read { width: 86px; padding: 2px 16px 0; }
.low { margin-top: 66px; }
.mid { margin-top: 55px; margin-right: 3px; }
.stack { display: grid; grid-template-rows: 28px 28px 28px; align-items: center; justify-items: center; flex: none; }
.stack.wide { width: 86px; justify-items: start; padding-left: 1px; }
.wide button { gap: 4px; padding-left: 2px; }
.rsep { width: 1px; height: 84px; background: #c6c6c6; flex: none; margin: 0 1px; }
.big { flex-direction: column; justify-content: flex-start; line-height: 13px; text-align: center; white-space: pre-line; flex: none; padding-top: 3px; }
.big > svg:first-child { margin-bottom: 8px; margin-top: 2px; }
.big > .i48:first-child { margin: 2px 0; }
.big > .rotate:first-child { margin: 6px 0 6px; }
.big > .split:first-child { margin: 5px 0 9px; }
.big span svg, .boxed svg.i8 { display: inline-block; vertical-align: -1px; }
.below { margin-top: 3px; }
.boxed svg.below { vertical-align: 1px; }
.actual { width: 34px; height: 42px; }
.rotate { width: 46px; height: 40px; }
.split { width: 42px; height: 38px; }
.boxed { display: block; width: 100%; height: 83px; border: 1px solid #e2e2e2; border-radius: 2px; background: #f9f9f9; text-align: center; line-height: 13px; padding: 2px 0; }
.boxed span { display: flex; align-items: center; justify-content: center; height: 48px; margin: 0 1px 4px; border: 1px solid #ddd; border-radius: 3px; background: #fbf9fa; }
.layouts { display: grid; grid-template-columns: repeat(4, 28px); grid-template-rows: 37px 37px; align-items: center; padding: 3px 0 7px 1px; }
.layouts button, .status .on { width: 27px; height: 27px; }
.aids { display: grid; grid-template-columns: 28px 28px 28px 14px 26px; grid-template-rows: repeat(3, 28px); align-items: center; justify-items: center; flex: none; }
.combo { display: grid; align-items: center; width: 84px; height: 23px; border: 1px solid #b5b5b5; border-radius: 3px; background: #fff; flex: none; }
.combo select, .combo svg { grid-area: 1 / 1; }
.combo select { width: 100%; appearance: none; padding-left: 3px; }
.combo svg { justify-self: end; margin-right: 4px; pointer-events: none; }

.doctabs { display: flex; height: 34px; flex: none; background: #8b8b8b; background-image: repeating-linear-gradient(45deg, #888 0 1px, #8f8f8f 1px 3px); border-bottom: 2px solid #fbe3b0; }
.doctab { width: 100px; background: #fce6b6; border-radius: 4px 4px 0 0; padding: 0 4px 0 5px; justify-content: space-between; position: relative; }
.doctab svg { align-self: flex-start; margin-top: 4px; }
.doctab::after { content: ""; position: absolute; left: 5px; right: 5px; bottom: 2px; height: 2px; background: #a79777; }
.sq { width: 28px; margin: 3px 2px 2px; background: #d0d0d0; border-radius: 3px; }
.sq.end { margin-left: auto; margin-right: 1px; width: 29px; }

.work { display: flex; flex: 1; min-height: 0; background: #9b9b9b; background-image: repeating-linear-gradient(45deg, #979797 0 1px, #a0a0a0 1px 3px); border-top: 1px solid #999; }
.side { width: 31px; background: #f3f3f3; display: flex; flex-direction: column; align-items: center; flex: none; }
.side > * { flex: none; }
.side button { width: 28px; height: 28px; position: relative; }
.side .dot::after { content: ""; position: absolute; right: 0; bottom: 0; width: 4px; height: 4px; border-radius: 2px; background: #5aa13c; }
.sidetop { height: 23px; width: 26px; }
.sidetop svg { margin: 1px 0 3px auto; }
.sidetop .dots { width: 26px; height: 9px; }
.side hr { width: 28px; border: 0; border-top: 1px solid #bbb; margin-bottom: 1px; }
.more { margin-top: 2px; }

.panel { display: flex; flex-direction: column; background: #fff; position: relative; flex: none; border-radius: 3px 3px 0 0; }
.panel h2 { height: 24px; display: flex; align-items: center; justify-content: space-between; padding: 0 3px 0 5px; flex: none; }
.panel h2 button { align-self: flex-start; margin-top: 5px; }
.layers { width: 194px; margin-left: 1px; padding: 0 2px; background: #fafafa; }
.panel.layers h2 { padding: 0 2px 0 3px; }
.tools { display: flex; align-items: center; height: 31px; background: #f1f1f1; flex: none; padding-left: 1px; }
.tools button { height: 30px; flex: none; }
.tsep { width: 1px; height: 28px; background: #c3c3c3; flex: none; margin: 0 1px; }
.grip { display: flex; flex-direction: column; justify-content: space-between; align-items: center; width: 10px; height: 26px; flex: none; }
.tools .end { margin-left: auto; }
.config { height: 21px; justify-content: flex-start; padding-left: 3px; background: #fff; flex: none; }
.config b, .list { font-weight: 700; }
.config svg { margin-left: auto; margin-right: 4px; }
.list { flex: 1; border: 1px solid #ddd; border-top: 0; background: #fff; }
.list li { display: flex; align-items: center; height: 23px; padding-left: 2px; gap: 3px; position: relative; border: 1px solid transparent; }
.list li > .i16 { margin-left: 1px; }
.list .sel { background: #d8d8d8; border-color: #aaa; }
.bulb { width: 16px; height: 20px; color: #c5e1f7; }
.bulb.lit { color: #ffcc40; }
.drop { position: absolute; left: 36px; top: 15px; width: 144px; height: 10px; }
.dragged { position: absolute; left: 93px; top: 22px; display: flex; align-items: center; gap: 4px; font-weight: 400; }
.mark { position: absolute; opacity: .3; width: 46px; height: 42px; right: 12px; bottom: 14px; }

.splitter { width: 11px; flex: none; display: flex; align-items: center; justify-content: center; }
.splitter button { width: 9px; height: 60px; background: #dedede; border: 1px solid #777; border-radius: 4px; }
.splitter svg { margin: 0 -1px; }

.content { width: 157px; background: #fce6b6; padding: 0 2px; }
.scroller { display: flex; flex: 1; min-height: 0; position: relative; background: #fff; overflow: hidden; }
.scroller .mark { right: 27px; width: 46px; height: 44px; bottom: 13px; }
.nodes { flex: 1; min-width: 0; overflow: hidden; }
.nodes li { display: flex; align-items: center; height: 22px; padding-left: 33px; gap: 4px; border: 1px solid transparent; white-space: nowrap; }
.nodes .root { padding-left: 2px; }
.nodes .sub { padding-left: 17px; }
.nodes .sel { background: #b5d6ee; border-color: #6aaae0; border-radius: 2px; }
.vbar { width: 15px; background: #efefef; display: flex; flex-direction: column; align-items: center; padding: 4px 0; flex: none; }
.vbar i { width: 5px; height: 16px; margin-top: 3px; background: #8d8d8d; border-radius: 3px; }
.vbar .long { height: 48px; }
.vbar .last { margin-top: auto; }
.hbar { height: 16px; background: #efefef; display: flex; align-items: center; padding: 0 21px 0 3px; flex: none; }
.hbar i { width: 27px; height: 5px; margin-left: 4px; background: #8d8d8d; border-radius: 3px; }
.hbar .last { margin-left: auto; }

.doc { flex: 1; min-width: 0; display: flex; flex-direction: column; background: #f3f3f3; border-left: 2px solid #f8f8f8; border-top: 2px solid #f8f8f8; }
.view { display: flex; flex: 1; min-height: 0; }
.canvas { flex: 1; min-width: 0; padding: 4px 6px 0; background: #646464; border: 1px solid #3f3f3f; overflow: hidden; }
.page { position: relative; height: 100%; background: #fff; box-shadow: 0 0 0 1px #333; overflow: hidden; }
.plan { width: 100%; height: 100%; }
.callout { position: absolute; left: 25px; top: 183px; width: 192px; height: 166px; border: 1px solid #f01010; background: #fff; padding-top: 1px; font: 11px/12px "Liberation Sans", Arial, sans-serif; white-space: nowrap; }
.status { display: flex; align-items: center; height: 30px; flex: none; padding-left: 1px; }
.status > button { flex: none; }
.status .push { margin-left: 9px; }
.status .grip { margin: 0 2px; }
.status .tsep { margin: 0 2px; }
.status .top { margin: 0 2px 18px 4px; }
.status .combo { width: 82px; }
.faded { opacity: .55; }
.pageno { flex: 1; min-width: 40px; height: 23px; margin-right: 2px; border: 1px solid #aaa; border-radius: 3px; background: #fff; text-align: right; padding-right: 3px; }

.t-ratio { font: 16px "Open Sans", sans-serif; fill: #3ba3f5; }
.t-num { font: 700 10px "Open Sans", sans-serif; fill: #3ba3f5; }
.t-xy { font: 700 8px "Open Sans", sans-serif; fill: #3ba3f5; }
.t-layer { font: 21px "Liberation Sans", Arial, sans-serif; }
.t-room { font: 7px "Liberation Sans", Arial, sans-serif; }
.t-note { font: 4px "Liberation Sans", Arial, sans-serif; fill: #333; }
```
